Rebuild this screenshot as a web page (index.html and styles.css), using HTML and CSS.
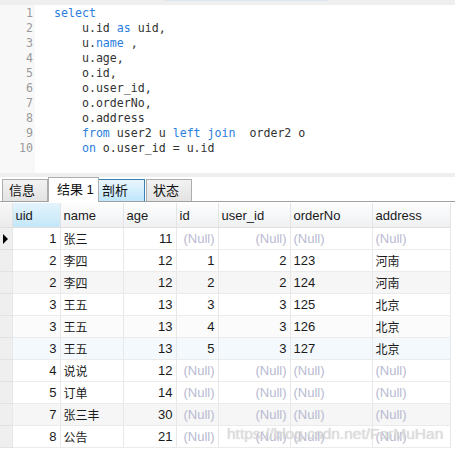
FILE: index.html
```html
<!DOCTYPE html>
<html>
<head>
<meta charset="utf-8">
<link rel="stylesheet" href="styles.css">
</head>
<body>
<div class="topbar"><span class="topseg"></span></div>
<div class="editor">
  <div class="gutter">
    <div>1</div><div>2</div><div>3</div><div>4</div><div>5</div><div>6</div><div>7</div><div>8</div><div>9</div><div>10</div>
  </div>
  <div class="code">
    <div class="ln"><span class="kw">select</span></div>
    <div class="ln">    u.id <span class="kw">as</span> uid,</div>
    <div class="ln">    u.<span class="kw">name</span> ,</div>
    <div class="ln">    u.age,</div>
    <div class="ln">    o.id,</div>
    <div class="ln">    o.user_id,</div>
    <div class="ln">    o.orderNo,</div>
    <div class="ln">    o.address</div>
    <div class="ln">    <span class="kw">from</span> user2 u <span class="kw">left</span> <span class="kw">join</span>  order2 o</div>
    <div class="ln">    <span class="kw">on</span> o.user_id = u.id</div>
  </div>
</div>
<div class="sep"></div>
<div class="tabs">
  <div class="tab">信息</div>
  <div class="tab active">结果 1</div>
  <div class="tab hover">剖析</div>
  <div class="tab">状态</div>
</div>
<div class="gridwrap">
<table class="grid">
  <colgroup>
    <col class="c0"><col class="c1"><col class="c2"><col class="c3"><col class="c4"><col class="c5"><col class="c6"><col class="c7">
  </colgroup>
  <thead>
    <tr><th class="ind"></th><th class="sel">uid</th><th>name</th><th>age</th><th>id</th><th>user_id</th><th>orderNo</th><th>address</th></tr>
  </thead>
  <tbody>
    <tr><td class="ind"><span class="arrow"></span></td><td class="n">1</td><td class="zh">张三</td><td class="n">11</td><td class="n nul">(Null)</td><td class="n nul">(Null)</td><td class="nul">(Null)</td><td class="nul">(Null)</td></tr>
    <tr><td class="ind"></td><td class="n">2</td><td class="zh">李四</td><td class="n">12</td><td class="n">1</td><td class="n">2</td><td>123</td><td class="zh">河南</td></tr>
    <tr class="alt"><td class="ind"></td><td class="n">2</td><td class="zh">李四</td><td class="n">12</td><td class="n">2</td><td class="n">2</td><td>124</td><td class="zh">河南</td></tr>
    <tr><td class="ind"></td><td class="n">3</td><td class="zh">王五</td><td class="n">13</td><td class="n">3</td><td class="n">3</td><td>125</td><td class="zh">北京</td></tr>
    <tr class="alt2"><td class="ind"></td><td class="n">3</td><td class="zh">王五</td><td class="n">13</td><td class="n">4</td><td class="n">3</td><td>126</td><td class="zh">北京</td></tr>
    <tr class="hov"><td class="ind"></td><td class="n">3</td><td class="zh">王五</td><td class="n">13</td><td class="n">5</td><td class="n">3</td><td>127</td><td class="zh">北京</td></tr>
    <tr><td class="ind"></td><td class="n">4</td><td class="zh">说说</td><td class="n">12</td><td class="n nul">(Null)</td><td class="n nul">(Null)</td><td class="nul">(Null)</td><td class="nul">(Null)</td></tr>
    <tr><td class="ind"></td><td class="n">5</td><td class="zh">订单</td><td class="n">14</td><td class="n nul">(Null)</td><td class="n nul">(Null)</td><td class="nul">(Null)</td><td class="nul">(Null)</td></tr>
    <tr class="alt"><td class="ind"></td><td class="n">7</td><td class="zh">张三丰</td><td class="n">30</td><td class="n nul">(Null)</td><td class="n nul">(Null)</td><td class="nul">(Null)</td><td class="nul">(Null)</td></tr>
    <tr><td class="ind"></td><td class="n">8</td><td class="zh">公告</td><td class="n">21</td><td class="n nul">(Null)</td><td class="n nul">(Null)</td><td class="nul">(Null)</td><td class="nul">(Null)</td></tr>
  </tbody>
</table>
<div class="watermark">https://blog.csdn.net/ForMuHan</div>
</div>
</body>
</html>
```
FILE: styles.css
```css
html, body {
  margin: 0;
  padding: 0;
  background: #ffffff;
}
body {
  width: 455px;
  height: 451px;
  overflow: hidden;
  font-family: "Liberation Sans", "Noto Sans CJK SC", sans-serif;
  font-size: 13px;
  color: #1a1a1a;
}
.topbar {
  height: 5px;
  background: #efefef;
  display: flex;
  padding-left: 165px;
}
.topseg {
  width: 162px;
  height: 1px;
  background: #dde6f0;
}
.editor {
  display: flex;
  height: 168px;
  overflow: hidden;
}
.gutter {
  width: 33px;
  padding-right: 2px;
  padding-top: 1px;
  background: #f8f8f8;
  text-align: right;
  font-family: "DejaVu Sans Mono", monospace;
  font-size: 11.6px;
  line-height: 15px;
  color: #9a9a9a;
}
.code {
  padding-left: 19px;
  padding-top: 1px;
  font-family: "DejaVu Sans Mono", monospace;
  font-size: 11.6px;
  line-height: 15px;
  color: #333333;
}
.ln {
  white-space: pre;
  height: 15px;
}
.kw {
  color: #2a7ee0;
}
.sep {
  height: 4px;
  background: #efefef;
}
.tabs {
  display: flex;
  align-items: flex-end;
  height: 24px;
  padding-left: 2px;
  border-bottom: 1px solid #a0a0a0;
  background: #ffffff;
}
.tab {
  box-sizing: border-box;
  width: 46px;
  height: 22px;
  padding-left: 6px;
  line-height: 21px;
  border: 1px solid #adadad;
  border-bottom: none;
  background: linear-gradient(#f2f2f2, #e3e3e3);
  color: #111;
  font-size: 13px;
  white-space: nowrap;
}
.tab.active {
  width: 51px;
  height: 25px;
  margin-bottom: -1px;
  padding-left: 8px;
  line-height: 23px;
  background: #ffffff;
  border-color: #adadad;
}
.tab.hover {
  padding-left: 3px;
  border-color: #3c7fb1;
  background: linear-gradient(#eaf6fd, #bee6fd);
  margin-right: 1px;
  border-left: none;
}
.gridwrap {
  position: relative;
  padding-top: 1px;
}
.grid {
  table-layout: fixed;
  border-collapse: collapse;
  width: 450px;
}
.c0 { width: 12px; }
.c1 { width: 48px; }
.c2 { width: 63px; }
.c3 { width: 53px; }
.c4 { width: 42px; }
.c5 { width: 72px; }
.c6 { width: 82px; }
.c7 { width: 78px; }
.grid th {
  height: 24px;
  padding: 0 3px;
  text-align: left;
  font-weight: normal;
  color: #1a1a1a;
  background: linear-gradient(#fdfdfd, #eef0f2);
  border-right: 1px solid #e4e4e4;
  border-bottom: 1px solid #e0e0e0;
  white-space: nowrap;
  overflow: hidden;
}
.grid th.sel {
  background: linear-gradient(#e3f4fc, #c4e6f8);
}
.grid th.ind {
  padding: 0;
  background: linear-gradient(#f7f7f7, #ececec);
}
.grid td {
  height: 21px;
  padding: 0 3px;
  border-right: 1px solid #e8e8e8;
  border-bottom: 1px solid #ebebeb;
  white-space: nowrap;
  overflow: hidden;
}
.grid td.ind {
  padding: 0;
  border-bottom: 1px solid #e2e2e2;
}
.grid td.n {
  text-align: right;
}
.grid td.zh {
  font-size: 12px;
}
.grid td.nul {
  color: #b8bad2;
}
.grid tr.alt td {
  background-color: #f6f6f6;
}
.grid tr.alt2 td {
  background-color: #fbfbfb;
}
.grid tr.hov td {
  background-color: #f4f9fd;
}
.grid tr td.ind {
  background-color: #efefef;
}
.arrow {
  display: block;
  width: 0;
  height: 0;
  margin-left: 3px;
  border-top: 5px solid transparent;
  border-bottom: 5px solid transparent;
  border-left: 5px solid #000000;
}
.watermark {
  position: absolute;
  left: 227px;
  top: 223px;
  font-family: "Liberation Sans", sans-serif;
  font-size: 15.5px;
  color: rgba(225, 225, 225, 0.85);
  text-shadow: 0 0 1px rgba(160, 160, 160, 0.6);
  white-space: nowrap;
}
```
